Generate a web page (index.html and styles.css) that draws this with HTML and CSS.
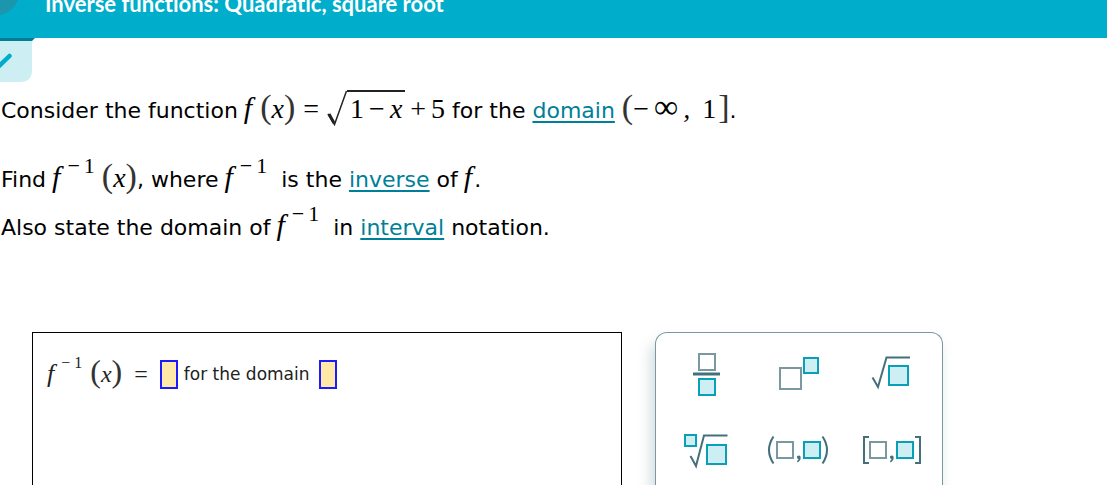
FILE: index.html
```html
<!DOCTYPE html>
<html lang="en">
<head>
<meta charset="utf-8">
<title>Inverse functions: Quadratic, square root</title>
<link rel="stylesheet" href="styles.css">
</head>
<body>
<header class="topbar">
  <svg class="topbar-mark" viewBox="0 0 45 38" aria-hidden="true"><circle cx="-5" cy="-9" r="24.6"/></svg>
  <h1 class="topbar-title">Inverse functions: Quadratic, square root</h1>
</header>
<button class="tab" type="button" aria-label="Expand">
  <svg viewBox="0 0 34 44" aria-hidden="true">
    <path d="M0 0H32V32Q32 44 20 44H0Z" fill="#cdeef3"/>
    <path d="M0 0H35L32 3H0Z" fill="#007f94"/>
    <path d="M-4 31L9.500 18" fill="none" stroke="#00adca" stroke-width="4.500" stroke-linecap="round"/>
  </svg>
</button>
<main class="content">
  <section class="question">
    <p class="intro">Consider the function<span class="math"><i class="fn">f</i><span class="fence">(</span><i>x</i><span class="fence">)</span><span class="eq">=</span><span class="root"><svg class="root-sign" viewBox="0 0 20 36" aria-hidden="true"><path d="M1 24L7.500 34.500L19.500 1"/><path class="heavy" d="M2 24L7 33"/></svg><span class="radicand">1<span class="op">−</span><i>x</i></span></span><span class="op">+</span>5</span> for the <a href="#domain">domain</a> <span class="math"><span class="fence">(</span>−<span class="inf">∞</span><i class="comma">,</i><span class="bound">1</span><span class="fence">]</span></span>.</p>
    <p>Find<span class="math"><i class="fn">f</i><span class="sup">−<span class="sup-num">1</span></span><span class="fence">(</span><i>x</i><span class="fence">)</span></span>, where<span class="math"><i class="fn">f</i><span class="sup">−<span class="sup-num">1</span></span></span> is the <a href="#inverse">inverse</a> of<span class="math"><i class="fn last">f</i></span>.</p>
    <p>Also state the domain of<span class="math"><i class="fn">f</i><span class="sup">−<span class="sup-num">1</span></span></span> in <a href="#interval">interval</a> notation.</p>
  </section>
  <div class="workspace">
    <form class="answer">
      <span class="math"><i class="fn">f</i><span class="sup">−<span class="sup-num">1</span></span><span class="fence">(</span><i>x</i><span class="fence">)</span></span>
      <span class="math equals">=</span>
      <input class="slot" type="text" id="rule" aria-label="Inverse function">
      <label for="dom">for the domain</label>
      <input class="slot" type="text" id="dom">
    </form>
    <div class="palette">
      <button type="button" aria-label="Fraction"><svg viewBox="0 0 92 70"><rect class="empty" x="38" y="18" width="16" height="16"/><path class="bar" d="M32 38H59"/><rect class="full" x="38" y="43" width="16" height="16"/></svg></button>
      <button type="button" aria-label="Exponent"><svg viewBox="0 0 92 70"><rect class="empty" x="27" y="32" width="21" height="21"/><rect class="full" x="51" y="22" width="14" height="15"/></svg></button>
      <button type="button" aria-label="Square root"><svg viewBox="0 0 92 70"><path class="line" d="M27.500 41.500L33 51L41.500 21.500H65"/><rect class="full" x="44" y="30" width="19" height="19"/></svg></button>
      <button type="button" aria-label="Nth root"><svg viewBox="0 0 92 70"><rect class="full" x="24" y="23" width="11" height="11"/><path class="line" d="M29.500 44L35 54L43 23.500H66.500"/><rect class="full" x="46" y="33" width="19" height="19"/></svg></button>
      <button type="button" aria-label="Open interval"><svg viewBox="0 0 92 70"><path class="line" d="M20.500 24.500Q11.500 38 20.500 51.500M69.500 24.500Q78.500 38 69.500 51.500"/><rect class="empty" x="24" y="30" width="16" height="16"/><rect class="full" x="51" y="30" width="16" height="16"/><path class="dot" d="M44 44.500Q46 42.500 47.500 44.500Q48.500 48 44.500 50.500L44 49Q46 47.500 45.500 47Q43.500 46.500 44 44.500Z"/></svg></button>
      <button type="button" aria-label="Closed interval"><svg viewBox="0 0 92 70"><path class="line" d="M24 25H19V51H24M70 25H75V51H70"/><rect class="empty" x="25" y="30" width="16" height="16"/><rect class="full" x="52" y="30" width="16" height="16"/><path class="dot" d="M45 44.500Q47 42.500 48.500 44.500Q49.500 48 45.500 50.500L45 49Q47 47.500 46.500 47Q44.500 46.500 45 44.500Z"/></svg></button>
    </div>
  </div>
</main>
</body>
</html>
```
FILE: styles.css
```css
* { box-sizing: border-box; }

body {
  margin: 0;
  height: 100vh;
  overflow: hidden;
  display: flex;
  flex-direction: column;
  align-items: stretch;
  background: #fff;
  color: #000;
  font-family: "DejaVu Sans", Verdana, sans-serif;
  font-size: 22px;
}

.topbar {
  flex: none;
  display: flex;
  align-items: flex-start;
  height: 38px;
  overflow: hidden;
  background: #00adca;
}

.topbar-mark { flex: none; width: 45px; height: 38px; fill: #1b96ac; }

.topbar-title {
  margin: -9px 0 0;
  color: #fff;
  font: 700 22px/26px Lato, "Open Sans", sans-serif;
  font-variant-ligatures: none;
  white-space: nowrap;
}

.tab {
  flex: none;
  align-self: flex-start;
  width: 34px;
  height: 44px;
  padding: 0;
  border: 0;
  background: none;
}

.tab svg { display: block; width: 34px; height: 44px; overflow: visible; }

.content {
  flex: 1;
  min-height: 0;
  display: flex;
  flex-direction: column;
  padding-top: 5px;
}

.question { padding-left: 1px; margin-bottom: 80px; }
.question p { margin: 0; line-height: 48px; white-space: nowrap; }
.question .intro { margin-bottom: 21px; }
.question a { color: #007f99; text-decoration-thickness: 2px; text-underline-offset: 3px; }

.math {
  font-family: "Liberation Serif", "Times New Roman", serif;
  font-size: 28px;
  line-height: 0;
  white-space: nowrap;
}

.fn { margin: 0 8px 0 6px; font-size: 30px; }
.fn.last { margin-right: 2px; }
.fence { font-size: 34px; color: #333; }
.eq { margin: 0 8px; }
.op { margin: 0 5px; }
.inf { margin: 0 5px; font-size: 34px; }
.bound { margin: 0 2px 0 12px; }

.sup {
  margin: 0 7px 0 -1px;
  font-size: 22px;
  vertical-align: 14px;
}

.sup-num { margin-left: 4px; }

.root { display: inline-flex; align-items: baseline; }
.root-sign { width: 20px; height: 36px; align-self: flex-start; fill: none; stroke: #222; stroke-width: 1.5; }
.root-sign .heavy { stroke-width: 3; }

.radicand {
  padding: 0 3px;
  border-top: 2px solid #222;
  line-height: 34px;
}

.workspace {
  flex: 1;
  min-height: 0;
  display: flex;
  align-items: stretch;
  gap: 33px;
  padding: 0 32px;
}

.answer {
  flex: 0 1 590px;
  display: flex;
  align-items: flex-start;
  padding: 27px 12px 0;
  border: 1px solid #000;
  border-bottom: 0;
  font-size: 17px;
  line-height: 29px;
  color: #222;
  white-space: nowrap;
}

.answer .math { font-size: 24px; line-height: 29px; }
.answer .fn { margin: 0 6px 0 2px; font-size: 26px; line-height: 0; }
.answer .fence { font-size: 32px; line-height: 0; }
.answer .sup { font-size: 16px; line-height: 0; margin: 0 8px 0 1px; }
.answer .equals { margin: 0 12px; }
.answer label { margin: 0 9px 0 6px; }

.slot {
  width: 18px;
  height: 29px;
  padding: 0;
  border: 2px solid #1a1aff;
  background: #ffe9a9;
}

.palette {
  flex: 0 0 288px;
  display: grid;
  grid-template-columns: repeat(3, 1fr);
  align-content: start;
  row-gap: 6px;
  padding: 3px 5px 0;
  border: 1px solid #7a989f;
  border-bottom: 0;
  border-radius: 12px 12px 0 0;
  box-shadow: -4px 10px 14px rgba(70, 110, 125, 0.25);
  background: #fff;
}

.palette button { height: 70px; padding: 0; border: 0; background: none; }
.palette svg { display: block; width: 92px; height: 70px; fill: none; stroke-width: 2; }
.empty { stroke: #7a989f; fill: #fff; }
.full { stroke: #0a9fb9; fill: #cdeef3; }
.line, .bar { stroke: #44707c; }
.bar { stroke-width: 3; }
.dot { fill: #44707c; }
```
